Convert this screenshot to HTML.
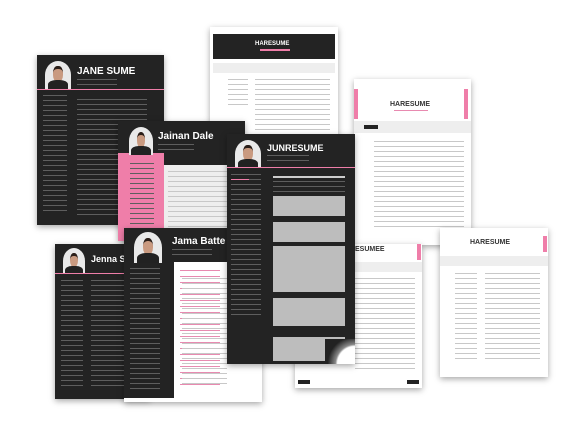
<!DOCTYPE html><html><head><style>
body{margin:0;width:577px;height:433px;background:#fff;position:relative;overflow:hidden;font-family:"Liberation Sans",sans-serif}
.c{position:absolute;box-shadow:0 2px 6px rgba(0,0,0,.35)}
.d{background:#232323}.w{background:#fff}
.a{position:absolute}
.ld{background:repeating-linear-gradient(#5e5e5e 0 1px,transparent 1px 5px)}
.lw{background:repeating-linear-gradient(#c8c8c8 0 1px,transparent 1px 5px)}
.lp{background:repeating-linear-gradient(#e88ab0 0 1px,transparent 1px 6px)}
.ph{position:absolute;border-radius:50% 50% 0 0;background:#e9e9e9;overflow:hidden}
.ph:before{content:"";position:absolute;left:32%;top:18%;width:36%;height:45%;border-radius:45%;background:#c99a80;border-top:3px solid #2a1e18}
.ph:after{content:"";position:absolute;left:10%;top:68%;width:80%;height:40%;border-radius:40% 40% 0 0;background:#222}
.pk{background:#ef7ea9}
.t{position:absolute;color:#fff;font-weight:bold;white-space:nowrap}
.gb{background:#bdbdbd}
</style></head><body>

<div class="c d" style="left:37px;top:55px;width:127px;height:170px">
 <div class="ph" style="left:8px;top:6px;width:26px;height:28px"></div>
 <div class="t" style="left:40px;top:11px;font-size:10px">JANE SUME</div>
 <div class="a ld" style="left:40px;top:24px;width:40px;height:6px"></div>
 <div class="a pk" style="left:0;top:34px;width:127px;height:1px"></div>
 <div class="a ld" style="left:6px;top:40px;width:24px;height:120px"></div>
 <div class="a ld" style="left:40px;top:44px;width:70px;height:120px"></div>
</div>

<div class="c w" style="left:210px;top:27px;width:128px;height:125px">
 <div class="a d" style="left:3px;top:7px;width:122px;height:25px"></div>
 <div class="t" style="left:45px;top:14px;font-size:6px">HARESUME</div>
 <div class="a pk" style="left:50px;top:22px;width:30px;height:2px"></div>
 <div class="a" style="left:3px;top:36px;width:122px;height:10px;background:#eee"></div>
 <div class="a lw" style="left:18px;top:52px;width:20px;height:30px"></div>
 <div class="a lw" style="left:45px;top:52px;width:75px;height:90px"></div>
</div>

<div class="c w" style="left:354px;top:79px;width:117px;height:166px">
 <div class="a pk" style="left:0;top:10px;width:4px;height:30px"></div>
 <div class="a pk" style="left:110px;top:10px;width:4px;height:30px"></div>
 <div style="position:absolute;left:36px;top:22px;font-size:7px;font-weight:bold;color:#333">HARESUME</div>
 <div class="a lp" style="left:40px;top:31px;width:34px;height:6px"></div>
 <div class="a" style="left:0;top:42px;width:117px;height:12px;background:#eee"></div>
 <div class="a d" style="left:10px;top:46px;width:14px;height:4px"></div>
 <div class="a lw" style="left:20px;top:62px;width:90px;height:90px"></div>
</div>

<div class="c d" style="left:118px;top:121px;width:127px;height:120px">
 <div class="a pk" style="left:0;top:32px;width:46px;height:88px"></div>
 <div class="ph" style="left:11px;top:6px;width:24px;height:28px"></div>
 <div class="t" style="left:40px;top:10px;font-size:10px">Jainan Dale</div>
 <div class="a ld" style="left:40px;top:23px;width:36px;height:7px"></div>
 <div class="a" style="left:46px;top:44px;width:81px;height:76px;background:#eee"></div>
 <div class="a lw" style="left:50px;top:50px;width:70px;height:66px"></div>
 <div class="a ld" style="left:12px;top:42px;width:24px;height:74px"></div>
</div>

<div class="c w" style="left:440px;top:228px;width:108px;height:149px">
 <div class="a pk" style="left:103px;top:8px;width:4px;height:16px"></div>
 <div style="position:absolute;left:30px;top:11px;font-size:7px;font-weight:bold;color:#333">HARESUME</div>
 <div class="a" style="left:0;top:28px;width:108px;height:10px;background:#eee"></div>
 <div class="a lw" style="left:15px;top:45px;width:22px;height:90px"></div>
 <div class="a lw" style="left:45px;top:45px;width:55px;height:90px"></div>
</div>

<div class="c w" style="left:295px;top:244px;width:127px;height:144px">
 <div class="a pk" style="left:122px;top:0;width:4px;height:16px"></div>
 <div style="position:absolute;left:60px;top:2px;font-size:7px;font-weight:bold;color:#333">ESUMEE</div>
 <div class="a" style="left:0;top:18px;width:127px;height:10px;background:#eee"></div>
 <div class="a lw" style="left:60px;top:34px;width:60px;height:95px"></div>
 <div class="a d" style="left:3px;top:136px;width:12px;height:4px"></div>
 <div class="a d" style="left:112px;top:136px;width:12px;height:4px"></div>
</div>

<div class="c d" style="left:55px;top:244px;width:95px;height:155px">
 <div class="ph" style="left:8px;top:4px;width:22px;height:26px"></div>
 <div class="t" style="left:36px;top:10px;font-size:9px">Jenna So</div>
 <div class="a pk" style="left:0;top:29px;width:95px;height:1px"></div>
 <div class="a ld" style="left:6px;top:36px;width:22px;height:110px"></div>
 <div class="a ld" style="left:36px;top:36px;width:55px;height:110px"></div>
</div>

<div class="c w" style="left:124px;top:228px;width:138px;height:174px">
 <div class="a d" style="left:0;top:0;width:50px;height:170px"></div>
 <div class="a d" style="left:0;top:0;width:138px;height:34px"></div>
 <div class="ph" style="left:10px;top:4px;width:28px;height:31px"></div>
 <div class="t" style="left:48px;top:8px;font-size:10px">Jama Batte</div>
 <div class="a ld" style="left:48px;top:21px;width:40px;height:8px"></div>
 <div class="a ld" style="left:6px;top:40px;width:30px;height:125px"></div>
 <div class="a lp" style="left:56px;top:42px;width:40px;height:120px"></div>
 <div class="a lw" style="left:58px;top:50px;width:45px;height:110px"></div>
</div>

<div class="c d" style="left:227px;top:134px;width:128px;height:230px">
 <div class="ph" style="left:8px;top:6px;width:26px;height:28px"></div>
 <div class="t" style="left:40px;top:9px;font-size:9px">JUNRESUME</div>
 <div class="a ld" style="left:40px;top:21px;width:42px;height:8px"></div>
 <div class="a pk" style="left:0;top:33px;width:128px;height:1px"></div>
 <div class="a ld" style="left:4px;top:40px;width:30px;height:145px"></div>
 <div class="a pk" style="left:4px;top:45px;width:18px;height:1px"></div>
 <div class="a" style="left:46px;top:42px;width:72px;height:2px;background:#ccc"></div>
 <div class="a ld" style="left:46px;top:47px;width:72px;height:12px"></div>
 <div class="a gb" style="left:46px;top:62px;width:72px;height:20px"></div>
 <div class="a gb" style="left:46px;top:88px;width:72px;height:20px"></div>
 <div class="a gb" style="left:46px;top:112px;width:72px;height:46px"></div>
 <div class="a gb" style="left:46px;top:164px;width:72px;height:28px"></div>
 <div class="a gb" style="left:46px;top:203px;width:72px;height:24px"></div>
 <div class="a" style="left:98px;top:205px;width:30px;height:25px;background:radial-gradient(circle at 100% 100%,#fff 0 45%,#888 50%,#222 70%)"></div>
</div>
</body></html>
